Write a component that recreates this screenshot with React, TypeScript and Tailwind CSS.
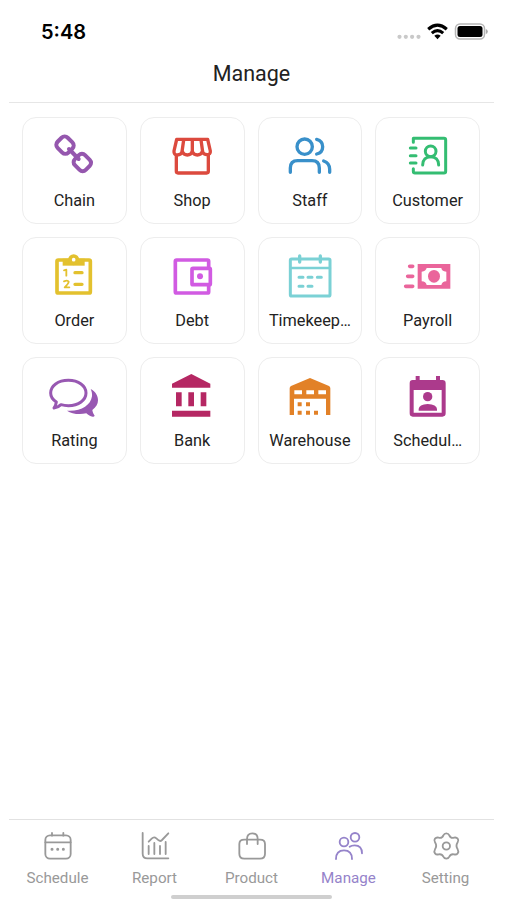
import React from 'react';

interface MenuItem {
    label: string;
    color: string;
    viewBox: string;
    icon: React.ReactNode;
}

interface TabItem {
    label: string;
    viewBox: string;
    active?: boolean;
    icon: React.ReactNode;
}

const menuItems: MenuItem[] = [
    {
        label: 'Chain',
        color: 'text-[#9557ae]',
        viewBox: '90 45 180 180',
        icon: (
            <g fill="none" stroke="currentColor" strokeWidth="12" strokeLinecap="round" strokeLinejoin="round">
                <rect x="130" y="84" width="46" height="43" rx="13" transform="rotate(45 153 105.500)" />
                <rect x="182" y="136" width="46" height="43" rx="13" transform="rotate(45 205 157.500)" />
                <path d="M165 117l29 30" />
            </g>
        ),
    },
    {
        label: 'Shop',
        color: 'text-[#dc4a3e]',
        viewBox: '442 45 180 180',
        icon: (
            <g fill="none" stroke="currentColor" strokeWidth="10" strokeLinejoin="round">
                <path d="M485 134v50q0 5 5 5h86q5 0 5-5v-50" />
                <path d="M486 88h93l8 35q1 11-10 11-10 0-14-9-4 10-15 10t-15-10q-4 10-15 10t-15-10q-4 10-15 10t-10-12z" />
                <path d="M507 90l-5 35M533 90v36M559 90l5 35" />
            </g>
        ),
    },
    {
        label: 'Staff',
        color: 'text-[#3990ca]',
        viewBox: '90 45 180 180',
        icon: (
            <g fill="none" stroke="currentColor" strokeWidth="10" strokeLinecap="round">
                <circle cx="164" cy="110" r="23" />
                <path d="M200 88c12 3 18 11 18 22s-6 19-18 22M121 187v-13q0-22 22-22h43q22 0 22 22v13M221 153q18 6 18 25v9" />
            </g>
        ),
    },
    {
        label: 'Customer',
        color: 'text-[#34bd72]',
        viewBox: '444 45 180 180',
        icon: (
            <g fill="none" stroke="currentColor" strokeWidth="9" strokeLinecap="round" strokeLinejoin="round">
                <path d="M490 97V85h92q5 0 5 5v94q0 5-5 5h-87q-5 0-5-5v-8M481 114h17M481 137h17M481 159h17" />
                <circle cx="542" cy="124" r="16" />
                <path d="M518 165c0-16 10-25 24-25s24 9 24 25" />
            </g>
        ),
    },
    {
        label: 'Order',
        color: 'text-[#e3c12e]',
        viewBox: '90 45 180 180',
        icon: (
            <g fill="none" stroke="currentColor" strokeWidth="11" strokeLinecap="round" strokeLinejoin="round">
                <rect x="129" y="90" width="100" height="99" rx="4" />
                <path d="M146 86h66v21h-66z" fill="currentColor" stroke="none" />
                <circle cx="179" cy="89" r="11" fill="#fff" />
                <path d="M183 128h21M183 163h21" strokeWidth="10" />
                <path d="M150 121l7-2v18M150 154q11-5 14 1 0 5-12 17h14" strokeWidth="5.500" />
            </g>
        ),
    },
    {
        label: 'Debt',
        color: 'text-[#d15be2]',
        viewBox: '442 45 180 180',
        icon: (
            <g fill="none" stroke="currentColor" strokeWidth="11" strokeLinejoin="round">
                <path d="M582 113V94q0-4-4-4h-92q-4 0-4 4v91q0 4 4 4h92q4 0 4-4v-19" />
                <rect x="532" y="115" width="55" height="49" rx="3" />
                <circle cx="556" cy="139" r="9" fill="currentColor" stroke="none" />
            </g>
        ),
    },
    {
        label: 'Timekeep…',
        color: 'text-[#7bd1d5]',
        viewBox: '90 45 180 180',
        icon: (
            <g fill="none" stroke="currentColor" strokeWidth="9" strokeLinecap="round" strokeLinejoin="round">
                <rect x="121" y="87" width="119" height="111" rx="4" />
                <path d="M121 114h119" strokeWidth="7" />
                <path d="M149 78v18M211 78v18" strokeWidth="10" />
                <path d="M147 142h12M174 142h12M202 142h12M147 169h12M174 169h12" />
            </g>
        ),
    },
    {
        label: 'Payroll',
        color: 'text-[#ea659b]',
        viewBox: '444 45 180 180',
        icon: (
            <g fill="none" stroke="currentColor" strokeWidth="11" strokeLinecap="round">
                <path d="M503 102h98v74h-98z" fill="currentColor" stroke="none" />
                <path d="M530 114h44q0 9 15 11v29q-13 1-15 11h-44q-2-10-15-11v-29q13-2 15-11z" fill="#fff" stroke="none" />
                <ellipse cx="552" cy="139" rx="18" ry="19" fill="currentColor" stroke="none" />
                <path d="M479 109h9M473 139h15M467 169h21" strokeLinejoin="round" />
            </g>
        ),
    },
    {
        label: 'Rating',
        color: 'text-[#9858b2]',
        viewBox: '90 45 180 180',
        icon: (
            <g fill="currentColor">
                <path d="M163 91c-31 0-53 16-53 38 0 11 6 20 17 27-1 8-3 13-7 18 10-1 16-5 21-10 7 2 14 3 22 3 31 0 53-17 53-38s-22-38-53-38z" fill="none" stroke="currentColor" strokeWidth="9" strokeLinejoin="round" />
                <path d="M230 117c15 8 22 20 22 34 0 12-6 21-17 29 1 8 4 13 7 17q-2 4-6 3c-7-1-13-4-19-10-23 5-44 1-58-8 41 3 71-15 75-43 1-8-1-15-4-22z" />
            </g>
        ),
    },
    {
        label: 'Bank',
        color: 'text-[#b52763]',
        viewBox: '442 45 180 180',
        icon: (
            <path fill="currentColor" d="M530 72l57 29v12H472v-12zM484 127h17v42h-17zM521 127h17v42h-17zM558 127h17v42h-17zM472 182h115v18H472z" />
        ),
    },
    {
        label: 'Warehouse',
        color: 'text-[#e28127]',
        viewBox: '90 45 180 180',
        icon: (
            <g fill="currentColor">
                <path fillRule="evenodd" d="M180 84l57 24q4 2 4 7v80h-13v-49h-96v49h-13v-80q0-5 4-7zM133 121v12h23v-12zM169 121v12h23v-12zM205 121v12h23v-12z" />
                <path d="M143 157h12v12h-12zM168 157h12v12h-12zM143 182h12v12h-12zM168 182h12v12h-12zM192 182h12v12h-12z" />
            </g>
        ),
    },
    {
        label: 'Schedul…',
        color: 'text-[#ac3a8c]',
        viewBox: '444 45 180 180',
        icon: (
            <g fill="currentColor">
                <path fillRule="evenodd" d="M497 78h12v12h49V78h12v12h7q10 0 10 10v90q0 10-10 10h-89q-9 0-9-10v-90q0-10 9-10h9zM491 120v68h84v-68z" />
                <circle cx="533" cy="140" r="14" />
                <path d="M506 182v-5q1-14 27-15 27 1 28 15v5z" />
            </g>
        ),
    },
];

const tabItems: TabItem[] = [
    {
        label: 'Schedule',
        viewBox: '125 60 96 96',
        icon: (
            <>
                <rect x="135" y="76" width="76" height="70" rx="14" />
                <path d="M135 97h76M155 69v8M189 69v8" />
                <path d="M155 118h.1M172 118h.1M189 118h.1" strokeWidth="9" />
            </>
        ),
    },
    {
        label: 'Report',
        viewBox: '415 60 96 96',
        icon: <path d="M426 69v62q0 14 14 14h63M444 108v24M461 99v33M478 108v24M495 96v36M444 95l9-9q7-7 14-1l7 6q5 4 10-1l19-20" />,
    },
    {
        label: 'Product',
        viewBox: '705 60 96 96',
        icon: <path d="M730 89h47q15 0 15 13v29q0 15-15 15h-47q-15 0-15-15v-29q0-13 15-13zM738 102V87q0-17 16-17t16 17v15" />,
    },
    {
        label: 'Manage',
        viewBox: '246 60 96 96',
        active: true,
        icon: (
            <>
                <circle cx="279" cy="96" r="13" />
                <circle cx="312" cy="82" r="13" />
                <path d="M255 147c0-18 8-26 24-26s24 8 24 26M296 110c4-3 9-4 15-4 14 0 22 9 22 24" />
            </>
        ),
    },
    {
        label: 'Setting',
        viewBox: '537 60 96 96',
        icon: (
            <>
                <circle cx="586" cy="108" r="11" />
                <path d="M577 76q3-6 9-6t9 6q4 10 14 7 7-2 11 3t0 11q-7 11 0 21 4 7 0 12t-11 3q-10-2-14 7-3 6-9 6t-9-6q-4-9-14-7-7 2-11-3t0-12q7-10 0-21-4-6 0-11t11-3q10 3 14-7z" />
            </>
        ),
    },
];

const StatusBar: React.FC = () => (
    <div className="flex h-[49px] items-center justify-between pt-[15px] pl-[32px] pr-[5px]">
        <span className="font-[Inter,sans-serif] text-[20px] font-semibold leading-none text-black">5:48</span>
        <svg className="h-[22px] w-[92px]" viewBox="0 0 92 22">
            <g fill="#c9c9c9">
                <circle cx="2.5" cy="15.8" r="2.1" />
                <circle cx="8.8" cy="15.8" r="2.1" />
                <circle cx="15.1" cy="15.8" r="2.1" />
                <circle cx="21.5" cy="15.8" r="2.1" />
            </g>
            <g fill="none" stroke="#000" strokeWidth="3.1">
                <path d="M31.200 8.2q9.300-8 18.600 0M34.800 12.200q5.700-5 11.400 0" />
                <path d="M37.300 14.800q3.200-2.600 6.400 0l-3.200 3.500z" fill="#000" stroke="none" />
            </g>
            <rect x="58.5" y="3" width="29" height="15" rx="4.5" fill="none" stroke="#b5b5b5" strokeWidth="1.5" />
            <rect x="60.5" y="5" width="25" height="11" rx="2.5" fill="#000" />
            <path d="M88.800 8v5q2-.5 2-2.500t-2-2.500z" fill="#aaa" />
        </svg>
    </div>
);

const MenuCard: React.FC<{ item: MenuItem }> = ({ item }) => (
    <button className="flex h-[107px] flex-col items-center rounded-[14px] border border-[#ededed] bg-white pt-[7px]">
        <svg className={`h-[60px] w-[60px] ${item.color}`} viewBox={item.viewBox}>{item.icon}</svg>
        <span className="mt-[4px] whitespace-nowrap text-[16.300px] leading-6 text-[#222]">{item.label}</span>
    </button>
);

const TabBar: React.FC = () => (
    <nav className="grid h-[76px] grid-cols-5 border-t border-[#e2e2e2] pt-[10px]">
        {tabItems.map(tab => (
            <button key={tab.label} className={`flex flex-col items-center ${tab.active ? 'text-[#9583ca]' : 'text-[#999]'}`}>
                <svg className="h-8 w-8" viewBox={tab.viewBox} fill="none" stroke="currentColor" strokeWidth="5.500" strokeLinecap="round" strokeLinejoin="round">
                    {tab.icon}
                </svg>
                <span className="mt-[4px] text-[15.200px] leading-6">{tab.label}</span>
            </button>
        ))}
    </nav>
);

const App: React.FC = () => {
    return (
        <div className="flex h-[900px] w-[507px] flex-col overflow-hidden bg-white pl-[9px] pr-[13px] font-[Roboto,sans-serif]">
            <StatusBar />
            <header className="flex h-[54px] items-center justify-center border-b border-[#e6e6e6] pb-[4px]">
                <h1 className="text-[21.500px] leading-none text-[#222]">Manage</h1>
            </header>
            <main className="grid flex-1 grid-cols-4 content-start gap-x-[13px] gap-y-[13px] pt-[14px] pl-[13px] pr-[14px]">
                {menuItems.map(item => <MenuCard key={item.label} item={item} />)}
            </main>
            <TabBar />
            <div className="flex h-[5px] justify-center">
                <div className="mr-[1px] h-[4px] w-[161px] rounded-full bg-[#cfcfcf]" />
            </div>
        </div>
    );
};

export default App;
